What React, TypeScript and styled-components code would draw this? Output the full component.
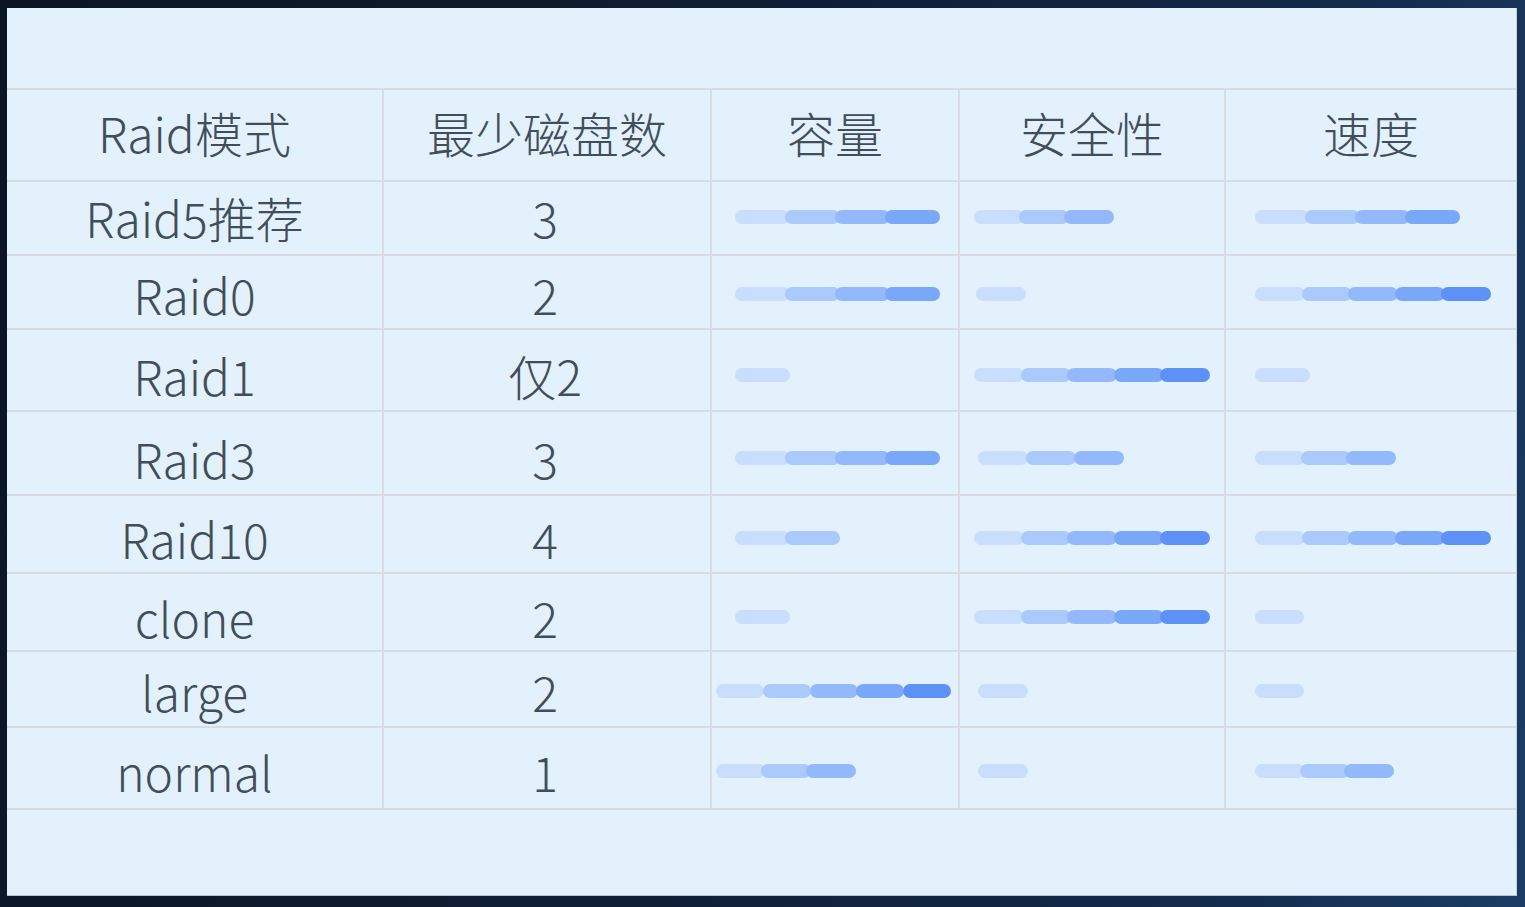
import React from "react";
import styled, { createGlobalStyle } from "styled-components";

const Global = createGlobalStyle`
  html, body { margin: 0; padding: 0; }
  body {
    width: 1525px;
    height: 907px;
    overflow: hidden;
    background: linear-gradient(100deg, #0b1524 0%, #0f1d33 45%, #132a4a 80%, #1b3c64 100%);
    font-family: "Noto Sans CJK SC", "Noto Sans", sans-serif;
  }
`;

const Frame = styled.div`
  box-sizing: border-box;
  width: 1525px;
  height: 907px;
  padding: 8px 8px 11px 7px;
  display: flex;
`;

const Panel = styled.div`
  flex: 1;
  display: flex;
  flex-direction: column;
  background: #e3f1fd;
  border-bottom: 1px solid #b7c3cf;
  border-right: 1px solid #c4d2e0;
`;

const TopSpace = styled.div`
  height: 80px;
  flex: none;
`;

const Table = styled.div`
  border-top: 2px solid #d6dce2;
  display: flex;
  flex-direction: column;
`;

const Row = styled.div<{ $h: number; $pt: number }>`
  box-sizing: border-box;
  height: ${(p) => p.$h}px;
  display: grid;
  grid-template-columns: 375px 328px 248px 266px 1fr;
  border-bottom: 2px solid #d6dce2;
  & > * {
    padding-top: ${(p) => Math.max(p.$pt, 0)}px;
    padding-bottom: ${(p) => Math.max(-p.$pt, 0)}px;
  }
`;

const Cell = styled.div<{ $first?: boolean; $head?: boolean }>`
  box-sizing: border-box;
  display: flex;
  align-items: center;
  justify-content: center;
  border-left: ${(p) => (p.$first ? "none" : "2px solid #d6dce2")};
  padding-right: ${(p) => (p.$first || p.$head ? 0 : 4)}px;
  color: #414e59;
  font-size: 48px;
  font-weight: 300;
  line-height: 1;
  white-space: nowrap;
`;

const BarCell = styled.div<{ $pad: number }>`
  box-sizing: border-box;
  display: flex;
  align-items: center;
  border-left: 2px solid #d6dce2;
  padding-left: ${(p) => p.$pad}px;
`;

const Track = styled.div`
  display: flex;
  align-items: center;
  height: 14px;
`;

const SEG_COLORS = ["#c8defc", "#aacafb", "#93b9fa", "#7aa8f8", "#5d91f6"];

const Seg = styled.div<{ $w: number; $overlap: number; $i: number }>`
  width: ${(p) => p.$w}px;
  height: 14px;
  border-radius: 7px;
  background: ${(p) => SEG_COLORS[p.$i]};
  margin-left: ${(p) => (p.$i === 0 ? 0 : -p.$overlap)}px;
  position: relative;
  z-index: ${(p) => p.$i + 1};
  flex: none;
`;

type Bar = { n: number; pad: number; w: number; step: number };

const Bars: React.FC<{ bar: Bar }> = ({ bar }) => (
  <BarCell $pad={bar.pad}>
    <Track>
      {Array.from({ length: bar.n }).map((_, i) => (
        <Seg key={i} $i={i} $w={bar.w} $overlap={bar.w - bar.step} />
      ))}
    </Track>
  </BarCell>
);

const b4 = (pad: number): Bar => ({ n: 4, pad, w: 55, step: 50 });
const b5 = (pad: number): Bar => ({ n: 5, pad, w: 50, step: 46.5 });
const b3 = (pad: number): Bar => ({ n: 3, pad, w: 50, step: 45 });
const b2 = (pad: number): Bar => ({ n: 2, pad, w: 55, step: 50 });
const b1 = (pad: number, w = 55): Bar => ({ n: 1, pad, w, step: w });

type RowData = { name: string; min: string; h: number; pt: number; cap: Bar; sec: Bar; spd: Bar };

const rows: RowData[] = [
  { name: "Raid5推荐", min: "3", h: 74, pt: -2, cap: b4(23), sec: b3(14), spd: b4(29) },
  { name: "Raid0", min: "2", h: 74, pt: 4, cap: b4(23), sec: b1(16, 50), spd: b5(29) },
  { name: "Raid1", min: "仅2", h: 82, pt: 10, cap: b1(23), sec: b5(14), spd: b1(29) },
  { name: "Raid3", min: "3", h: 84, pt: 10, cap: b4(23), sec: { n: 3, pad: 18, w: 50, step: 48 }, spd: { n: 3, pad: 29, w: 50, step: 45.5 } },
  { name: "Raid10", min: "4", h: 78, pt: 8, cap: b2(23), sec: b5(14), spd: b5(29) },
  { name: "clone", min: "2", h: 78, pt: 10, cap: b1(23), sec: b5(14), spd: b1(29, 49) },
  { name: "large", min: "2", h: 76, pt: 4, cap: { n: 5, pad: 4, w: 48, step: 46.75 }, sec: b1(18, 50), spd: b1(29, 49) },
  { name: "normal", min: "1", h: 82, pt: 6, cap: b3(4), sec: b1(18, 50), spd: { n: 3, pad: 29, w: 50, step: 44.5 } },
];

export default function App() {
  return (
    <>
      <Global />
      <Frame>
        <Panel>
          <TopSpace />
          <Table>
            <Row $h={92} $pt={-6}>
              <Cell $first $head>Raid模式</Cell>
              <Cell $head>最少磁盘数</Cell>
              <Cell $head>容量</Cell>
              <Cell $head>安全性</Cell>
              <Cell $head>速度</Cell>
            </Row>
            {rows.map((r) => (
              <Row key={r.name} $h={r.h} $pt={r.pt}>
                <Cell $first>{r.name}</Cell>
                <Cell>{r.min}</Cell>
                <Bars bar={r.cap} />
                <Bars bar={r.sec} />
                <Bars bar={r.spd} />
              </Row>
            ))}
          </Table>
        </Panel>
      </Frame>
    </>
  );
}
